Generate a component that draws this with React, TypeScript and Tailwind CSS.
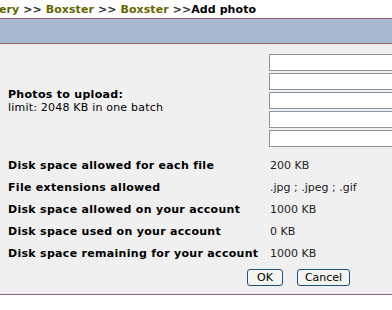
import React from "react";

const rows: [string, string][] = [
  ["Disk space allowed for each file", "200 KB"],
  ["File extensions allowed", ".jpg ; .jpeg ; .gif"],
  ["Disk space allowed on your account", "1000 KB"],
  ["Disk space used on your account", "0 KB"],
  ["Disk space remaining for your account", "1000 KB"],
];

export default function App() {
  return (
    <div
      className="w-[392px] h-[310px] bg-white overflow-hidden text-[11px] text-black"
      style={{ fontFamily: '"DejaVu Sans", Verdana, sans-serif' }}
    >
      <div className="h-[18px] leading-[18px] font-bold whitespace-nowrap -ml-[1px] pt-[1px] tracking-[0.08px]">
        <span className="text-[#666600]">ery</span>
        <span className="text-[#333]"> &gt;&gt; </span>
        <span className="text-[#666600]">Boxster</span>
        <span className="text-[#333]"> &gt;&gt; </span>
        <span className="text-[#666600]">Boxster</span>
        <span className="text-[#333]"> &gt;&gt;</span>
        <span>Add photo</span>
      </div>
      <div className="h-[26px] bg-[#a7b9d1] border-y border-[#a0606a]" />
      <div className="h-[251px] bg-[#f0f0f0] border-b border-[#a0606a] pt-[10px]">
        <div className="flex items-center">
          <div className="w-[269px] shrink-0 pl-[8px]">
            <div className="font-bold leading-[13px] tracking-[0.3px]">Photos to upload:</div>
            <div className="leading-[13px] tracking-[0.2px]">limit: 2048 KB in one batch</div>
          </div>
          <div className="flex flex-col gap-[2px] shrink-0">
            {[0, 1, 2, 3, 4].map((i) => (
              <input
                key={i}
                className="h-[17px] w-[140px] bg-white border border-[#8a959e] outline-none"
              />
            ))}
          </div>
        </div>
        <div className="mt-[8px] flex flex-col">
          {rows.map(([k, v]) => (
            <div key={k} className="flex h-[22px] items-center whitespace-nowrap">
              <div className="w-[270px] shrink-0 pl-[8px] font-bold tracking-[0.3px]">{k}</div>
              <div className="text-[#222]">{v}</div>
            </div>
          ))}
        </div>
        <div className="flex gap-[14px] pl-[247px] mt-[4px]">
          <button className="h-[17px] px-[9px] leading-[14px] bg-[#f4f4f0] border border-[#1c5180] rounded-[3px]">
            OK
          </button>
          <button className="h-[17px] px-[7px] leading-[14px] bg-[#f4f4f0] border border-[#1c5180] rounded-[3px]">
            Cancel
          </button>
        </div>
      </div>
    </div>
  );
}
